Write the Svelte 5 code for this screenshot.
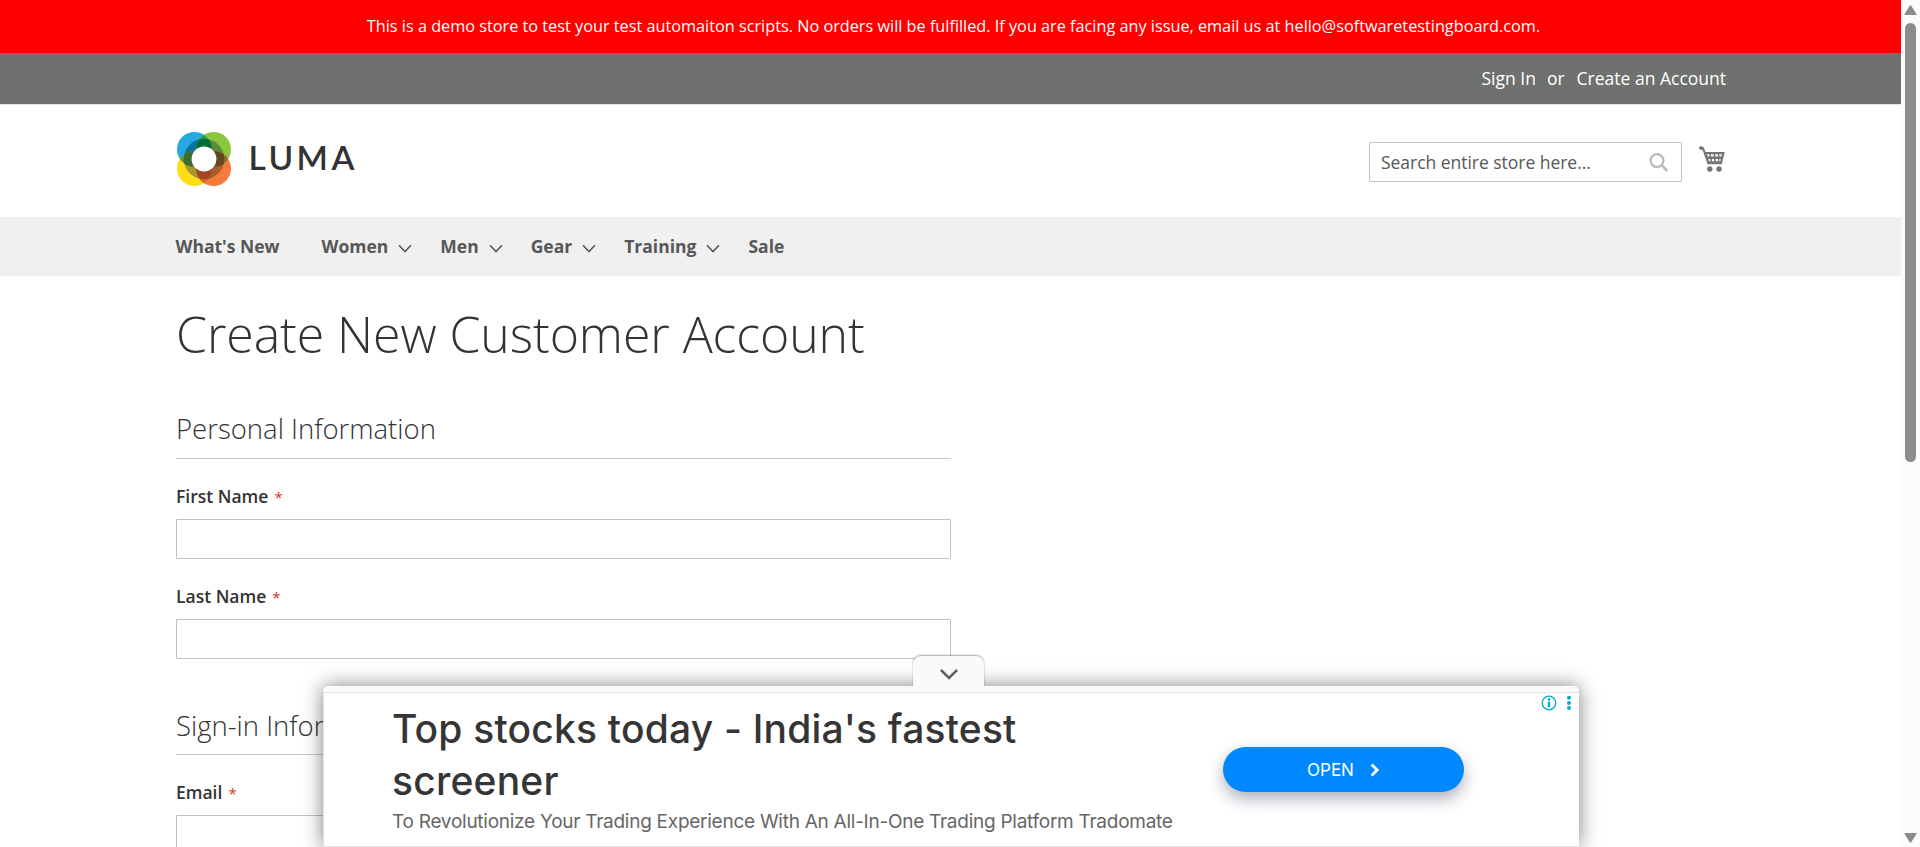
<script>
  const nav = [
    { label: "What's New", menu: false },
    { label: 'Women', menu: true },
    { label: 'Men', menu: true },
    { label: 'Gear', menu: true },
    { label: 'Training', menu: true },
    { label: 'Sale', menu: false }
  ];
  const sections = [
    { title: 'Personal Information', fields: ['First Name', 'Last Name'] },
    { title: 'Sign-in Information', fields: ['Email'] }
  ];
</script>

<div class="screen">
  <div class="page">
    <div class="notice">This is a demo store to test your test automaiton scripts. No orders will be fulfilled. If you are facing any issue, email us at hello@softwaretestingboard.com.</div>
    <div class="panel">
      <a class="signin" href="#signin">Sign In</a><span class="or">or</span><a class="create" href="#create">Create an Account</a>
    </div>
    <header>
      <a class="logo" href="#home">
        <svg width="54" height="54" viewBox="0 0 54 54">
          <defs>
            <clipPath id="ring"><circle cx="27" cy="27" r="20.3" /></clipPath>
            <clipPath id="tl"><circle cx="17.4" cy="17.4" r="17.4" /></clipPath>
            <clipPath id="br"><circle cx="36.6" cy="36.6" r="17.4" /></clipPath>
          </defs>
          <circle cx="17.4" cy="17.4" r="17.4" fill="#26a9e0" />
          <circle cx="36.6" cy="17.4" r="17.4" fill="#8cc63f" />
          <circle cx="17.4" cy="36.6" r="17.4" fill="#ffde17" />
          <circle cx="36.6" cy="36.6" r="17.4" fill="#f47b3b" />
          <g clip-path="url(#tl)">
            <circle cx="36.6" cy="17.4" r="17.4" fill="#2f9b4c" />
            <circle cx="17.4" cy="36.6" r="17.4" fill="#5a9b41" />
          </g>
          <g clip-path="url(#br)">
            <circle cx="36.6" cy="17.4" r="17.4" fill="#8d6a2d" />
            <circle cx="17.4" cy="36.6" r="17.4" fill="#d9652b" />
          </g>
          <g clip-path="url(#ring)">
            <circle cx="17.4" cy="17.4" r="17.4" fill="#0b759f" />
            <circle cx="36.6" cy="17.4" r="17.4" fill="#5b8a3c" />
            <circle cx="17.4" cy="36.6" r="17.4" fill="#a99632" />
            <circle cx="36.6" cy="36.6" r="17.4" fill="#a5602e" />
            <g clip-path="url(#tl)">
              <circle cx="36.6" cy="17.4" r="17.4" fill="#006c38" />
              <circle cx="17.4" cy="36.6" r="17.4" fill="#3b6d33" />
            </g>
            <g clip-path="url(#br)">
              <circle cx="36.6" cy="17.4" r="17.4" fill="#65481f" />
              <circle cx="17.4" cy="36.6" r="17.4" fill="#a34822" />
            </g>
          </g>
          <circle cx="27" cy="27" r="12.4" fill="#fff" />
        </svg>
        <span>LUMA</span>
      </a>
      <div class="tools">
        <div class="search">
          <span>Search entire store here...</span>
          <svg width="20" height="20" viewBox="0 0 20 20" fill="none" stroke="#b9b9b9">
            <circle cx="8" cy="7.6" r="6.4" stroke-width="2.2" />
            <path d="M12.6 12.2 18.4 18" stroke-width="2.6" />
          </svg>
        </div>
        <svg class="cart" width="26" height="26" viewBox="0 0 26 26" fill="#757575">
          <path d="M1.6.2C3 .2 4.4.8 5.2 2.6L6.5 6H25.7L22.8 18.2H8.6L3.9 4.7C3.6 4 3 3.8 2.2 3.8 1 3.8.1 3 .1 2 .1 1 .7.2 1.6.2Z" />
          <g fill="#fff">
            <path d="M7.9 8.3h2.5v2.3H8.7zM12 8.3h2.6v2.3H12zM16.2 8.3h2.6v2.3h-2.6zM20.4 8.3h2.4l-.6 2.3h-1.8zM9.3 13.1h2.1v2.2h-1.4zM13 13.1h2.2v2.2H13zM16.8 13.1H19v2.2h-2.2zM20.3 13.1h1.5l-.5 2.2h-1z" />
          </g>
          <circle cx="10.8" cy="23" r="2.7" /><circle cx="20" cy="23" r="2.7" />
        </svg>
      </div>
    </header>
    <nav>
      {#each nav as item}
        <a href="#nav" class:plain={!item.menu}>{item.label}{#if item.menu}<svg width="14" height="9" viewBox="0 0 14 9" fill="none" stroke="#575757" stroke-width="1.5"><path d="M1 1.2 7 7.6 13 1.2" /></svg>{/if}</a>
      {/each}
    </nav>
    <main>
      <h1>Create New Customer Account</h1>
      {#each sections as section}
        <section>
          <h2>{section.title}</h2>
          {#each section.fields as field}
            <label><span class="name">{field}<i>*</i></span><input type="text" /></label>
          {/each}
        </section>
      {/each}
    </main>
  </div>

  <div class="scrollbar">
    <svg width="13" height="11" viewBox="0 0 13 11"><path d="M6.5 1 11.8 9.3H1.2Z" fill="#8b8b8b" stroke="#8b8b8b" stroke-width="1.4" stroke-linejoin="round" /></svg>
    <div class="thumb"></div>
    <svg class="down" width="13" height="11" viewBox="0 0 13 11"><path d="M6.5 10 11.8 1.7H1.2Z" fill="#8b8b8b" stroke="#8b8b8b" stroke-width="1.4" stroke-linejoin="round" /></svg>
  </div>

  <aside class="ad">
    <div class="tab">
      <svg width="18" height="11" viewBox="0 0 18 11" fill="none" stroke="#616161" stroke-width="2.5"><path d="M.9 1 9 9 17.1 1" /></svg>
    </div>
    <div class="strip"></div>
    <div class="creative">
      <div class="copy">
        <div class="headline">Top stocks today - India's fastest<br />screener</div>
        <div class="sub">To Revolutionize Your Trading Experience With An All-In-One Trading Platform Tradomate</div>
      </div>
      <div class="open">
        <span>OPEN</span>
        <svg width="10" height="14" viewBox="0 0 10 14" fill="none" stroke="#fff" stroke-width="2.8"><path d="M1.6 1.5 7.2 7 1.6 12.5" /></svg>
      </div>
      <svg class="choices" width="32" height="16" viewBox="0 0 32 16">
        <circle cx="8" cy="8" r="6.8" fill="none" stroke="#00aecd" stroke-width="1.3" />
        <circle cx="8" cy="4.4" r="1.3" fill="#00aecd" /><path d="M6.8 6.6h2.4v5.6H6.8z" fill="#00aecd" />
        <circle cx="28" cy="2.8" r="2" fill="#00aecd" /><circle cx="28" cy="8" r="2" fill="#00aecd" /><circle cx="28" cy="13" r="2" fill="#00aecd" />
      </svg>
    </div>
  </aside>
</div>

<style>
  :global(body) { margin: 0; background: #fff; overflow: hidden; }
  .screen { position: relative; display: flex; width: 1920px; height: 847px; overflow: hidden; font-family: "Open Sans", sans-serif; font-size: 17.5px; color: #333; }
  .screen * { box-sizing: border-box; }
  a { color: inherit; text-decoration: none; }
  .page { width: 1901px; height: 847px; overflow: hidden; }
  .notice { height: 53px; line-height: 52px; padding-left: 6px; background: #f00; color: #fff; font-size: 16.25px; text-align: center; white-space: nowrap; }
  .panel { display: flex; justify-content: flex-end; height: 52px; padding-right: 175px; line-height: 51px; background: #6e716e; border-bottom: 1px solid #e3e3e3; color: #fff; white-space: nowrap; }
  .or { margin: 0 12px 0 11px; }
  header { display: flex; justify-content: space-between; height: 112px; padding: 27px 176px 0 177px; }
  .logo { display: flex; align-items: flex-start; }
  .logo span { margin: 5px 0 0 17.5px; font: 600 33.5px/40px Lato, sans-serif; letter-spacing: 3.4px; color: #333; }
  .tools { display: flex; align-items: flex-start; padding-top: 10px; }
  .search { display: flex; align-items: center; justify-content: space-between; width: 313px; height: 40px; padding: 0 12px 0 11px; border: 1px solid #c2c2c2; border-radius: 1px; color: #575757; }
  .search span { letter-spacing: -0.03px; }
  .search svg { margin-top: 1px; }
  .cart { margin: 4px 0 0 17px; }
  nav { display: flex; height: 59px; padding-left: 175.5px; line-height: 59px; background: #f0f0f0; color: #575757; font-weight: 700; white-space: nowrap; }
  nav a { display: flex; align-items: center; margin-right: 28px; }
  nav a.plain { margin-right: 42px; }
  nav svg { margin: 4px 0 0 10px; }
  main { width: 951px; padding: 30px 0 0 176px; }
  h1 { margin: 0; font-size: 50px; line-height: 56px; font-weight: 300; letter-spacing: -0.08px; white-space: nowrap; }
  section { padding-top: 49px; }
  h1 + section { padding-top: 48px; }
  h2 { margin: 0; height: 49px; border-bottom: 1px solid #c6c6c6; font-size: 27.5px; line-height: 38px; font-weight: 300; white-space: nowrap; }
  section + section h2 { height: 47px; line-height: 36px; }
  label { display: block; padding-top: 25px; }
  .name { display: block; height: 24px; margin-bottom: 11px; line-height: 24px; font-weight: 600; }
  i { margin-left: 6px; color: #e02b27; font-size: 15px; font-style: normal; font-weight: 400; }
  input { display: block; width: 100%; height: 40px; margin: 0; border: 1px solid #c2c2c2; border-radius: 1px; background: #fff; }
  .scrollbar { display: flex; flex-direction: column; align-items: center; width: 19px; height: 847px; padding-top: 5px; background: #fbfbfb; }
  .thumb { width: 11px; height: 439px; margin-top: 7px; border-radius: 6px; background: #8b8b8b; }
  .down { margin-top: auto; margin-bottom: 4px; }
  .ad { position: absolute; left: 323px; top: 686px; width: 1256px; height: 161px; border-radius: 5px 5px 0 0; background: #fafafa; box-shadow: 0 0 20px 0 rgba(0,0,0,.5); }
  .strip { height: 6px; }
  .tab { position: absolute; left: 590px; top: -30px; display: flex; align-items: center; justify-content: center; width: 71px; height: 32px; border-radius: 8px 8px 0 0; background: #fafafa; box-shadow: 0 -1px 2px rgba(0,0,0,.35); clip-path: inset(-6px -6px 2px -6px); }
  .tab svg { margin-top: 4px; }
  .creative { position: relative; display: flex; height: 155px; border: 1px solid #e2e2e2; border-right: 0; background: #fff; }
  .copy { width: 899px; padding: 10px 0 0 68px; white-space: nowrap; }
  .headline { font: 500 39px/52px Inter, sans-serif; letter-spacing: 0.2px; color: #353535; }
  .sub { margin-top: 1px; font: 400 19px/28px Inter, sans-serif; letter-spacing: -0.26px; color: #666; }
  .open { display: flex; align-items: center; justify-content: center; width: 241px; height: 45px; margin-top: 54px; border-radius: 23px; background: #08f; box-shadow: 0 7px 16px rgba(20,30,60,.35); color: #fff; font: 400 17px/44px Inter, sans-serif; }
  .open svg { margin-left: 16px; }
  .choices { position: absolute; right: 6px; top: 1.5px; }
</style>
